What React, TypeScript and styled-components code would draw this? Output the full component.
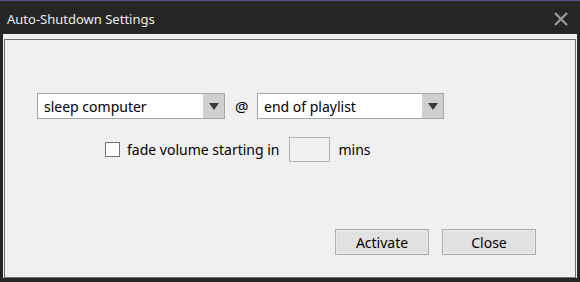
import React from "react";
import styled, { createGlobalStyle } from "styled-components";

const Global = createGlobalStyle`
  html, body { margin: 0; padding: 0; background: #2a2a2a; }
  * { box-sizing: border-box; }
`;

const Frame = styled.div`
  width: 580px;
  height: 282px;
  background: #262626;
  border-top: 1px solid #55558f;
  display: flex;
  flex-direction: column;
  font-family: "Noto Sans", "Open Sans", sans-serif;
`;

const TitleBar = styled.div`
  height: 33px;
  flex: none;
  display: flex;
  align-items: center;
  justify-content: space-between;
  padding: 2px 12px 0 7px;
  color: #ececec;
  font-size: 13px;
`;

const Content = styled.div`
  flex: 1;
  margin: 0 3px 4px 3px;
  background: #f0f0f0;
  padding: 5px 1px 0 1px;
  display: flex;
`;

const Panel = styled.div`
  flex: 1;
  border: 1px solid #6e6e6e;
  display: flex;
  flex-direction: column;
  color: #000;
  font-size: 14px;
`;

const Row = styled.div<{ $top: number; $left: number }>`
  display: flex;
  align-items: center;
  margin-top: ${(p) => p.$top}px;
  padding-left: ${(p) => p.$left}px;
`;

const Select = styled.div<{ $w: number }>`
  width: ${(p) => p.$w}px;
  height: 26px;
  border: 1px solid #a6a6a6;
  background: #fff;
  display: flex;
  align-items: stretch;
`;

const SelectText = styled.div`
  flex: 1;
  padding-left: 6px;
  display: flex;
  align-items: center;
  white-space: nowrap;
`;

const Arrow = styled.div`
  width: 21px;
  background: #cfcfcf;
  display: flex;
  align-items: center;
  justify-content: center;
`;

const At = styled.span`
  width: 13px;
  margin: 0 9px 0 10px;
  text-align: center;
  font-size: 15px;
`;

const Check = styled.div`
  width: 15px;
  height: 15px;
  border: 1px solid #737373;
  background: #fff;
`;

const Label = styled.span<{ $ml: number }>`
  white-space: nowrap;
  margin-left: ${(p) => p.$ml}px;
`;

const NumInput = styled.div`
  width: 41px;
  height: 25px;
  margin-left: 9px;
  border: 1px solid #b3b3b3;
  background: #f0f0f0;
`;

const Buttons = styled.div`
  margin-top: auto;
  display: flex;
  justify-content: flex-end;
  gap: 13px;
  padding: 0 39px 22px 0;
`;

const Button = styled.div`
  width: 94px;
  height: 26px;
  border: 1px solid #adadad;
  background: #e1e1e1;
  box-shadow: inset 0 0 0 1px #e9e9e9;
  display: flex;
  align-items: center;
  justify-content: center;
`;

const Tri = () => (
  <svg width="10" height="7" viewBox="0 0 10 7">
    <path d="M0 0 H10 L5 7 Z" fill="#3a3a3a" />
  </svg>
);

const CloseX = () => (
  <svg width="14" height="14" viewBox="0 0 14 14">
    <path d="M1 1 L13 13 M13 1 L1 13" stroke="#9b9b9b" strokeWidth="2.2" />
  </svg>
);

export default function App() {
  return (
    <>
      <Global />
      <Frame>
        <TitleBar>
          <span>Auto-Shutdown Settings</span>
          <CloseX />
        </TitleBar>
        <Content>
          <Panel>
            <Row $top={53} $left={32}>
              <Select $w={188}>
                <SelectText>sleep computer</SelectText>
                <Arrow><Tri /></Arrow>
              </Select>
              <At>@</At>
              <Select $w={187}>
                <SelectText>end of playlist</SelectText>
                <Arrow><Tri /></Arrow>
              </Select>
            </Row>
            <Row $top={18} $left={100}>
              <Check />
              <Label $ml={7}>fade volume starting in</Label>
              <NumInput />
              <Label $ml={9}>mins</Label>
            </Row>
            <Buttons>
              <Button>Activate</Button>
              <Button>Close</Button>
            </Buttons>
          </Panel>
        </Content>
      </Frame>
    </>
  );
}
